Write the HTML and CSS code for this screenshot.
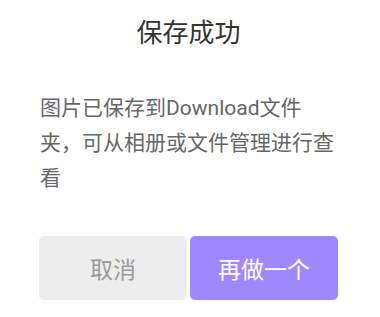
FILE: index.html
```html
<!DOCTYPE html>
<html lang="zh-CN">
<head>
  <meta charset="UTF-8">
  <meta name="viewport" content="width=device-width, initial-scale=1.0">
  <title>保存成功</title>
  <link rel="stylesheet" href="styles.css">
</head>
<body>
  <div class="dialog">
    <h1 class="title">保存成功</h1>
    <p class="message">图片已保存到Download文件夹，可从相册或文件管理进行查看</p>
    <div class="buttons">
      <button type="button" class="btn btn-cancel">取消</button>
      <button type="button" class="btn btn-again">再做一个</button>
    </div>
  </div>
</body>
</html>
```

FILE: styles.css
```css
body {
  margin: 0;
  padding: 0;
  background: #fff;
  font-family: Roboto, "Noto Sans CJK SC", sans-serif;
}

.dialog {
  width: 299px;
  padding: 16px 0 0 39px;
}

.title {
  margin: 0;
  font-size: 26px;
  font-weight: normal;
  line-height: 34px;
  text-align: center;
  color: #333;
}

.message {
  margin: 41px 0 0 1px;
  font-size: 21px;
  line-height: 35px;
  color: #666;
}

.buttons {
  display: flex;
  gap: 3px;
  margin-top: 40px;
}

.btn {
  flex: 1;
  height: 64px;
  border: none;
  border-radius: 5px;
  font-family: Roboto, "Noto Sans CJK SC", sans-serif;
  font-size: 23px;
  cursor: pointer;
}

.btn-cancel {
  background: #ededed;
  color: #999;
}

.btn-again {
  background: #9f88ff;
  color: #fff;
}
```
